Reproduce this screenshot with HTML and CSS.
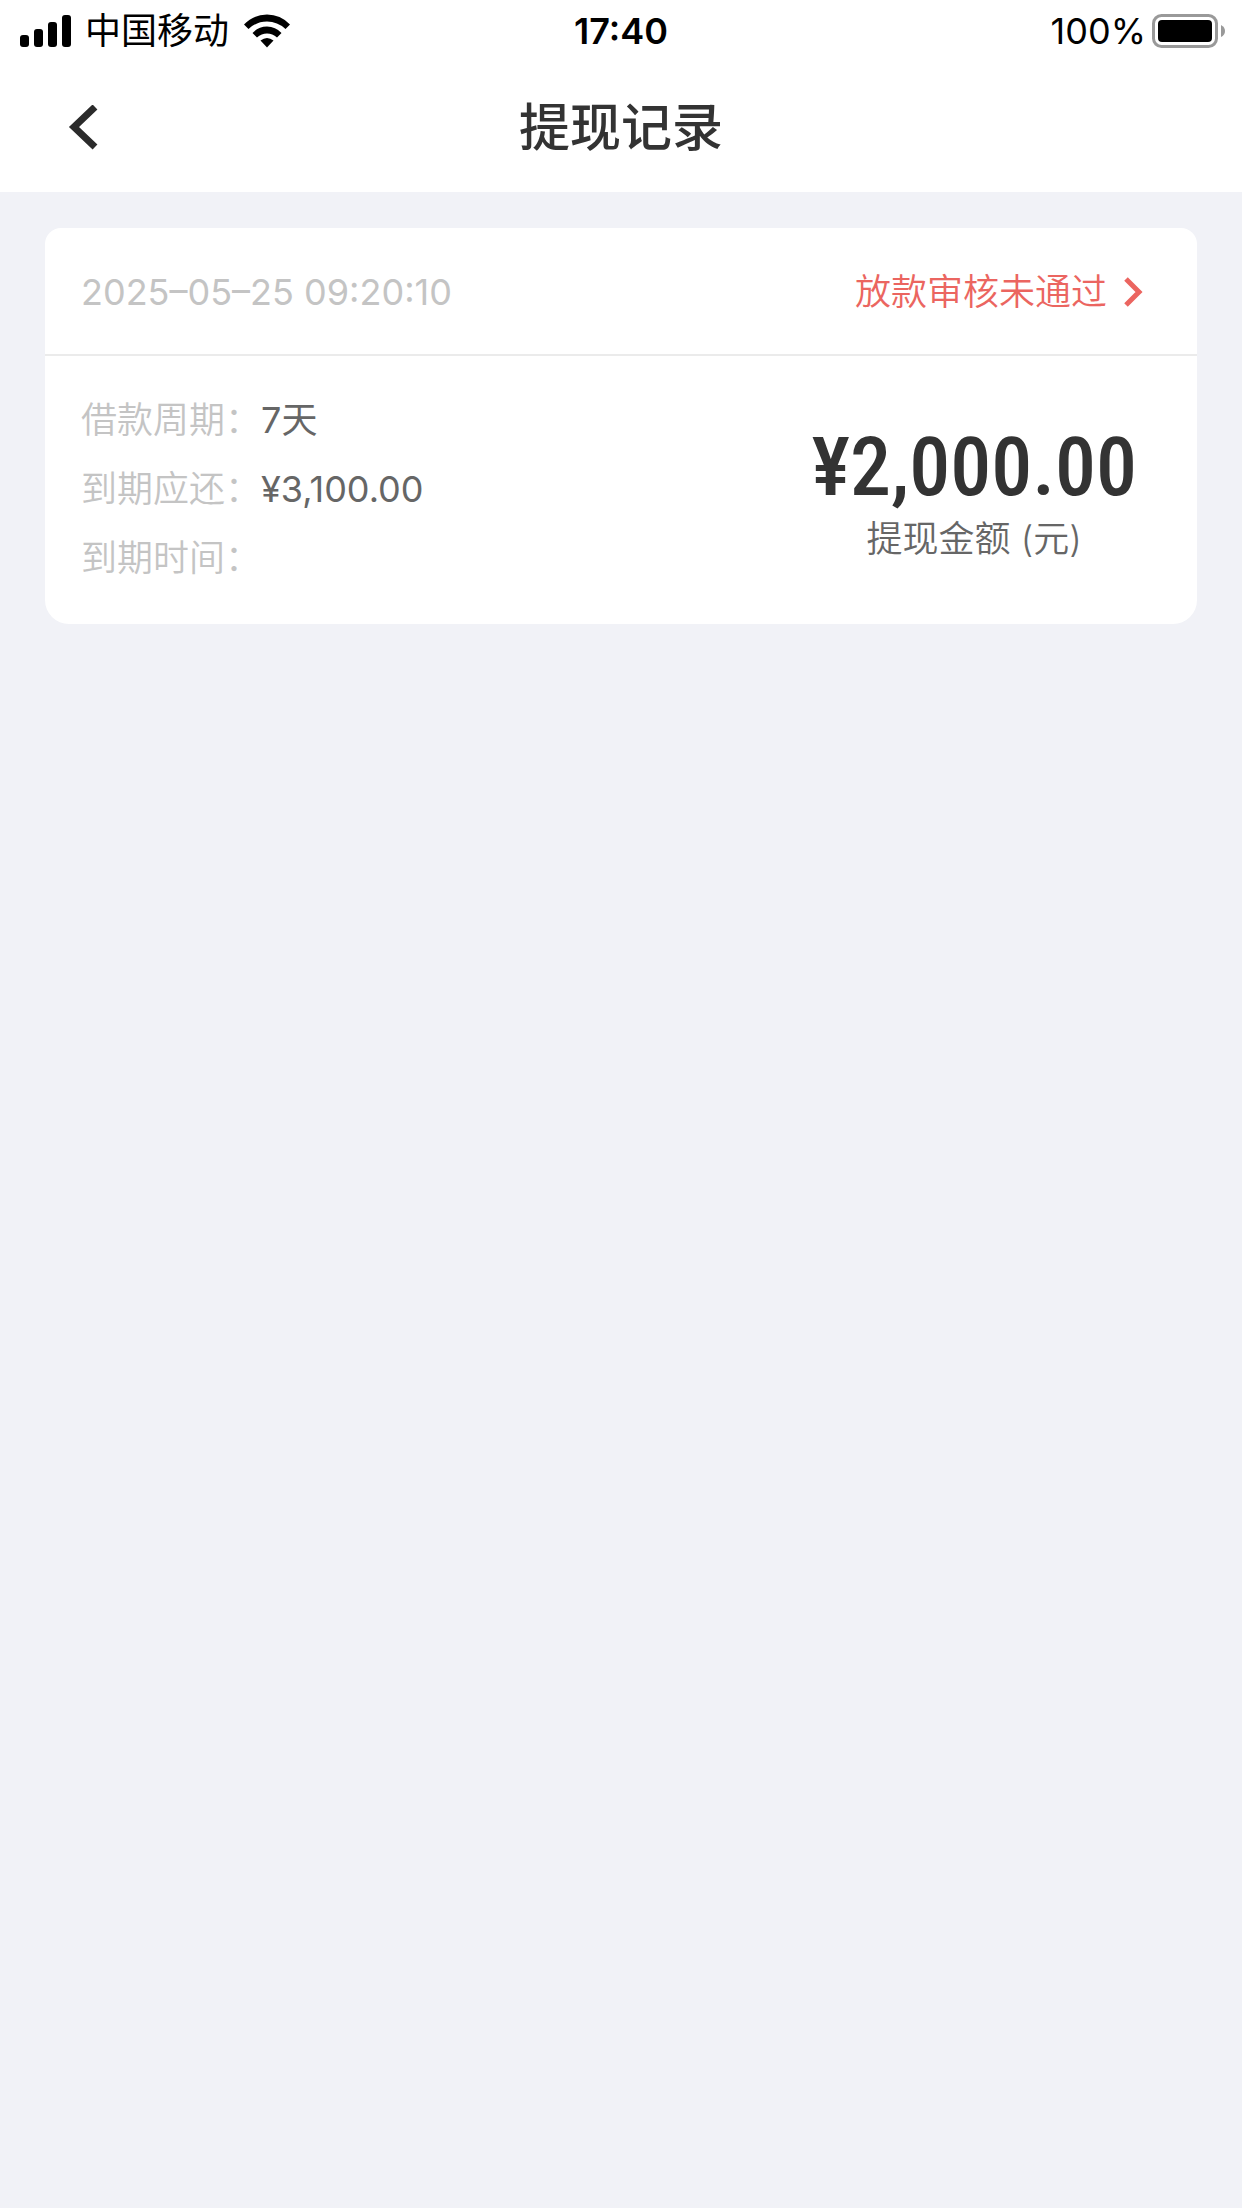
FILE: index.html
```html
<!doctype html>
<html lang="zh-CN">
<head>
    <meta charset="utf-8" />
    <meta name="viewport" content="width=device-width, initial-scale=1" />
    <title>提现记录</title>
    <link rel="stylesheet" href="styles.css">
</head>
<body>
<div class="status-bar">
    <div class="carrier">
        <svg class="signal" width="54" height="32" viewBox="-4 0 54 32" overflow="visible">
            <rect x="0" y="20" width="9" height="12" rx="3"/>
            <rect x="14" y="14" width="9" height="18" rx="3"/>
            <rect x="28" y="7" width="9" height="25" rx="3"/>
            <rect x="42" y="0" width="9" height="32" rx="3"/>
        </svg>
        <span>中国移动</span>
        <svg class="wifi" width="46" height="34" viewBox="0 0 46 34">
            <path d="M0 10.5Q9.500 .5 23 .5T46 10.500L41.500 15Q33.500 7.500 23 7.500T4.500 15Z"/>
            <path d="M8.500 19Q14.500 12.500 23 12.500T37.500 19L33 23.500Q28.500 19.500 23 19.500T13 23.500Z"/>
            <path d="M16.500 26.500Q23 21.500 29.500 26.500L23 33.500Z"/>
        </svg>
    </div>
    <div class="time">17:40</div>
    <div class="power">
        <span>100%</span>
        <svg class="battery" width="74" height="34" viewBox="0 0 74 34">
            <rect x="1.500" y="1.500" width="63" height="31" rx="8" fill="#fff" stroke="#999" stroke-width="3"/>
            <rect x="6" y="6" width="54" height="22" rx="4"/>
            <path d="M69 11Q73 13 73 17T69 23Z" fill="#999"/>
        </svg>
    </div>
</div>
<header class="nav">
    <button class="back" type="button" aria-label="返回">
        <svg width="30" height="46" viewBox="0 0 30 46">
            <path d="M27 2L6 22L27 42" fill="none" stroke="#2b2b2b" stroke-width="7"/>
        </svg>
    </button>
    <h1>提现记录</h1>
</header>
<main class="list">
    <section class="card">
        <div class="card-head">
            <time class="date">2025–05–25 09:20:10</time>
            <a class="state" href="#">放款审核未通过
                <svg width="20" height="30" viewBox="0 0 20 30">
                    <path d="M3 2L16 15L3 28" fill="none" stroke="#eb6560" stroke-width="5"/>
                </svg>
            </a>
        </div>
        <div class="card-body">
            <dl class="info">
                <div><dt>借款周期：</dt><dd>7天</dd></div>
                <div><dt>到期应还：</dt><dd>¥3,100.00</dd></div>
                <div><dt>到期时间：</dt><dd></dd></div>
            </dl>
            <div class="amount">
                <p class="money">¥2,000.00</p>
                <p class="tip">提现金额 (元)</p>
            </div>
        </div>
    </section>
</main>
</body>
</html>
```

FILE: styles.css
```css
*{
    margin:0;
    padding:0;
    box-sizing:border-box;
}
body{
    min-height:100vh;
    background-color:#f1f2f7;
    font-family:Inter,"Noto Sans CJK SC",sans-serif;
    font-size:36px;
    line-height:48px;
    font-weight:350;
    color:#666;
}
svg{
    display:block;
    flex:none;
}
/* 状态栏 */
.status-bar{
    display:grid;
    grid-template-columns:1fr auto 1fr;
    align-items:center;
    height:62px;
    padding:0 16px;
    background-color:#fff;
    font-weight:400;
    color:#000;
}
.carrier,.power{
    display:flex;
    align-items:center;
}
.carrier{
    gap:15px;
}
.power{
    justify-content:flex-end;
    gap:6px;
}
.time{
    font-weight:600;
}
/* 标题栏 */
.nav{
    display:grid;
    grid-template-columns:1fr auto 1fr;
    align-items:center;
    height:130px;
    padding:2px 68px 0;
    background-color:#fff;
}
.nav h1{
    font-size:51px;
    line-height:72px;
    font-weight:500;
    color:#333;
}
.back{
    width:48px;
    border:none;
    background:none;
    cursor:pointer;
}
.list{
    padding:36px 45px;
}
.card{
    border-radius:16px 16px 24px 24px;
    background-color:#fff;
}
.card-head{
    display:flex;
    justify-content:space-between;
    align-items:center;
    height:128px;
    padding:2px 54px 0 36px;
    border-bottom:2px solid #ebebeb;
}
.date{
    font-weight:400;
    color:#c4c4c4;
}
.state{
    display:flex;
    align-items:center;
    gap:16px;
    color:#eb6560;
    text-decoration:none;
}
.card-body{
    display:flex;
    justify-content:space-between;
    align-items:center;
    height:268px;
    padding:0 60px 2px 36px;
}
.info div{
    display:flex;
    height:69px;
    align-items:center;
}
.info dt{
    color:#c4c4c4;
}
.info dd{
    font-weight:400;
}
.amount{
    padding-top:4px;
    text-align:center;
}
.money{
    font-family:"Roboto Condensed",Roboto,sans-serif;
    font-size:82px;
    line-height:96px;
    font-weight:500;
    color:#333;
}
```
